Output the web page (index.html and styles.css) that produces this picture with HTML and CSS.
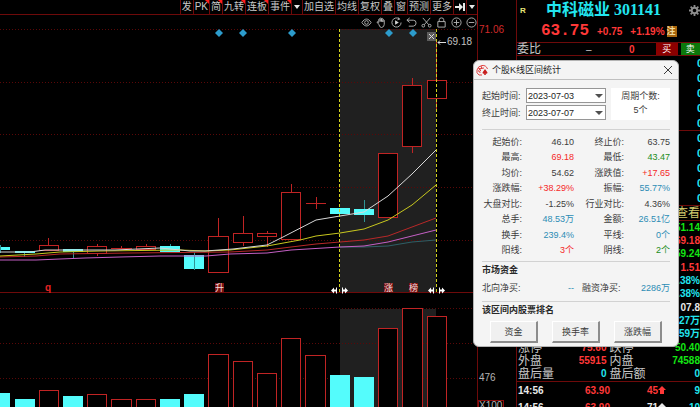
FILE: index.html
```html
<!DOCTYPE html>
<html lang="zh-CN">

<head>
    <meta charset="UTF-8">
    <title>中科磁业 301141</title>
    <link rel="stylesheet" href="styles.css">
</head>
<body>

  <div class="app">

    <main class="chart">
      <div class="chart-head">
        <nav class="toolbar">
          <button>发</button>
          <button class="hot">PK</button>
          <button class="hot">简</button>
          <button class="hot">九转</button>
          <button class="hot">连板</button>
          <button class="hot">事件</button>
          <button class="drop" aria-label="事件菜单"><svg viewBox="0 0 6 4"><path d="M0 0h6L3 4z"/></svg></button>
          <button>加自选</button>
          <button>均线</button>
          <button>复权</button>
          <button>叠</button>
          <button>窗</button>
          <button>预测</button>
          <button>更多</button>
          <button class="next" aria-label="移到最后"><svg viewBox="0 0 10 8"><path d="M0 3h4V0l4 4-4 4V5H0zM8 0h2v8H8z"/></svg></button>
          <button class="drop" aria-label="菜单"><svg viewBox="0 0 6 4"><path d="M0 0h6L3 4z"/></svg></button>
        </nav>

        <div class="tools">
          <button aria-label="显示"><svg viewBox="0 0 12 12"><path d="M1 6c3-5 7-5 10 0-3 5-7 5-10 0z"/><circle cx="6" cy="6" r="2"/></svg></button>
          <button aria-label="拖动"><svg viewBox="0 0 12 12"><path d="M3 8L1 5.500q1-1 2 .5V2.500q.8-1 1.500 0V5 1.500q.8-1 1.500 0V5 2q.8-1 1.500 0v3.500V3.500q1-1 1.500 0V8q0 3-3 3.500Q4 11.500 3 8z"/></svg></button>
          <button aria-label="回放"><svg viewBox="0 0 12 12"><path d="M9 2a5 5 0 1 0 2 4"/><path d="M8 .500l1.500 2-2.500.5"/><path class="solid" d="M4.500 3.500v5L8.500 6z"/></svg></button>
          <button aria-label="撤销"><svg viewBox="0 0 12 12"><path d="M4 1L1 3.500 4 6M1 3.500h7q3 0 3 3t-3 3.500H3"/></svg></button>
          <button aria-label="剪切"><svg viewBox="0 0 12 12"><path d="M2 1l6.500 7.500M10 1L3.500 8.500"/><circle cx="2.500" cy="9.500" r="1.500"/><circle cx="9.500" cy="9.500" r="1.500"/></svg></button>
          <button aria-label="锁定"><svg viewBox="0 0 12 12"><path d="M2 5h8v6H2zM3.500 5V3q0-2 2.500-2t2.500 2v2"/></svg></button>
          <button aria-label="放大"><svg viewBox="0 0 12 12"><circle cx="6" cy="6" r="5"/><path d="M3 6h6M6 3v6"/></svg></button>
          <button aria-label="缩小"><svg viewBox="0 0 12 12"><circle cx="6" cy="6" r="5"/><path d="M3 6h6"/></svg></button>
        </div>
      </div>

      <svg class="plot" viewBox="0 29 516 264">
        <rect class="band" x="340" y="29" width="96" height="264"/>
        <path class="grid" d="M0 29.500H477M0 82.500H477M0 134.500H477M0 187.500H477M0 240.500H477"/>
        <path class="frame" d="M0 292.500H516M477.500 29V293"/>

        <!-- candles -->
        <g class="up">
          <path d="M48.500 238v7M97.500 244v12M121.500 246v2M146.500 244v2M218.500 218v18M243.500 216v17M243.500 243v3M267.500 231v16M291.500 184v8M316.500 197v12M412.500 78v7M412.500 147v6M436.500 42v38M436.500 98v12"/>
          <path d="M111 248.500h21M306 203.500h20"/>
          <rect x="39.500" y="245.500" width="19" height="5"/>
          <rect x="87.500" y="246.500" width="19" height="7"/>
          <rect x="136.500" y="246.500" width="19" height="3"/>
          <rect x="208.500" y="236.500" width="20" height="36"/>
          <rect x="233.500" y="233.500" width="19" height="9"/>
          <rect x="257.500" y="233.500" width="19" height="3"/>
          <rect x="281.500" y="192.500" width="19" height="47"/>
          <rect x="378.500" y="153.500" width="19" height="64"/>
          <rect x="402.500" y="85.500" width="19" height="61"/>
          <rect x="427.500" y="80.500" width="19" height="18"/>
        </g>
        <g class="down">
          <rect x="-10" y="247" width="20" height="3"/>
          <rect x="15" y="251" width="20" height="2"/>
          <rect x="63" y="249" width="20" height="3"/>
          <rect x="160" y="246" width="20" height="6"/>
          <rect x="184" y="255" width="20" height="14"/>
          <rect x="330" y="208" width="20" height="6"/>
          <rect x="354" y="209" width="20" height="6"/>
          <path d="M.5 245v8M24.500 253v4M73.500 252v6M170.500 244v2M194.500 252v18M364.500 200v9M364.500 215v7"/>
        </g>

        <!-- moving averages -->
        <g class="ma">
          <polyline stroke="#2f5f66" points="340,247 364,247 388,246 412,242 436,240"/>
          <polyline stroke="#c45fc4" points="0,260 36,260 60,259 85,258 120,257 160,256 206,256 230,254 267,253 291,250 340,247 364,246 388,242 412,236 436,230"/>
          <polyline stroke="#b82828" points="0,257 36,256 60,254 130,253 230,252 267,250 291,247 316,244 340,242 364,240 388,236 412,227 436,218"/>
          <polyline stroke="#c8c81e" points="0,256 36,254 60,252 100,251 180,250 206,251 230,250 267,246 300,240 316,236 340,233 364,229 388,220 412,205 436,185"/>
          <polyline stroke="#d8d8d8" points="0,252 30,252 45,250 115,250 160,248 190,251 205,251 233,249 267,245 283,237 316,220 340,216 364,212 388,196 412,174 436,150"/>
        </g>

        <path class="limit" d="M339.500 29V292M436.500 29V292"/>

        <path class="diamond" d="M219 29l4 4-4 4-4-4zM243 29l4 4-4 4-4-4zM292 29l4 4-4 4-4-4zM389 29l4 4-4 4-4-4zM413 29l4 4-4 4-4-4z"/>

        <rect class="close-box" x="427" y="32" width="9" height="9"/>
        <path class="thin" d="M429 34l5 5M434 34l-5 5M438 42.500h8M440 40.500l-2 2 2 2"/>
        <text class="price-tip" x="447" y="45">69.18</text>

        <text class="mark-q" x="45" y="291">q</text>
        <rect class="mark" x="215" y="283" width="9" height="9"/>
        <rect class="mark" x="384" y="283" width="9" height="9"/>
        <rect class="mark" x="409" y="283" width="9" height="9"/>
        <text class="mark-text" x="215" y="291">升</text>
        <text class="mark-text" x="384" y="291">涨</text>
        <text class="mark-text" x="409" y="291">榜</text>

        <g class="handle">
          <path d="M331 290.500l3-3v2h2v-2h1v6h-1v-2h-2v2z"/>
          <path d="M348 290.500l-3-3v2h-2v-2h-1v6h1v-2h2v2z"/>
          <path d="M428 290.500l3-3v2h2v-2h1v6h-1v-2h-2v2z"/>
          <path d="M445 290.500l-3-3v2h-2v-2h-1v6h1v-2h2v2z"/>
        </g>

        <text class="axis-top" x="479" y="33">71.06</text>
      </svg>

      <svg class="plot" viewBox="0 293 516 114">
        <rect class="band" x="340" y="309" width="96" height="98"/>
        <path class="grid" d="M0 308.500H477M0 343.500H477M0 378.500H477"/>
        <path class="frame" d="M477.500 293V407"/>
        <g class="up">
          <rect x="39.500" y="390.500" width="19" height="20"/>
          <rect x="87.500" y="394.500" width="19" height="20"/>
          <rect x="111.500" y="399.500" width="20" height="20"/>
          <rect x="136.500" y="399.500" width="19" height="20"/>
          <rect x="208.500" y="354.500" width="20" height="60"/>
          <rect x="233.500" y="361.500" width="19" height="60"/>
          <rect x="257.500" y="373.500" width="19" height="60"/>
          <rect x="281.500" y="338.500" width="19" height="80"/>
          <rect x="305.500" y="355.500" width="20" height="60"/>
          <rect x="378.500" y="328.500" width="19" height="90"/>
          <rect x="402.500" y="308.500" width="20" height="110"/>
          <rect x="427.500" y="316.500" width="19" height="100"/>
        </g>
        <g class="down">
          <rect x="-10" y="393" width="20" height="20"/>
          <rect x="15" y="399" width="20" height="20"/>
          <rect x="63" y="396" width="20" height="20"/>
          <rect x="160" y="399" width="20" height="20"/>
          <rect x="184" y="394" width="20" height="20"/>
          <rect x="330" y="375" width="20" height="40"/>
          <rect x="354" y="377" width="20" height="40"/>
        </g>
        <text class="axis-text" x="479" y="347">951</text>
        <text class="axis-text" x="479" y="381">476</text>
        <rect class="unit-box" x="478.500" y="400.500" width="25" height="12"/>
        <text class="axis-text" x="479" y="409">X100</text>
      </svg>
    </main>

    <aside class="quote">
      <header class="stock">
        <span class="flag">R</span>
        <h1>中科磁业 301141</h1>
        <button class="gear" aria-label="设置"><svg viewBox="0 0 12 12"><circle cx="6" cy="6" r="3"/><path d="M6 0v2.500M6 9.500V12M0 6h2.500M9.500 6H12M1.800 1.800l1.800 1.800M8.400 8.400l1.800 1.800M1.800 10.200l1.800-1.800M8.400 3.600l1.800-1.800"/></svg></button>
      </header>

      <div class="price">
        <strong>63.75</strong>
        <span>+0.75</span>
        <span>+1.19%</span>
        <em>注</em>
      </div>

      <div class="ratio">
        <span class="label">委比</span>
        <span class="dash">–</span>
        <b class="red">0</b>
        <button class="buy">买</button>
        <button class="sell">卖</button>
      </div>

      <div class="levels"><b>0</b><b>0</b><b>0</b><b>0</b><b>0</b></div>
      <div class="levels"><b>0</b><b>0</b><b>0</b><b>0</b><b>0</b></div>

      <div class="look"><a href="#">查看</a></div>

      <table class="detail">
        <tr><th></th><td></td><th></th><td class="green">51.14</td></tr>
        <tr><th></th><td></td><th></th><td class="red">69.18</td></tr>
        <tr><th></th><td></td><th></th><td class="green">59.24</td></tr>
        <tr><th></th><td></td><th></th><td class="red">1.51</td></tr>
        <tr><th></th><td></td><th></th><td class="cyan">.38%</td></tr>
        <tr><th></th><td></td><th></th><td class="cyan">.38%</td></tr>
        <tr><th></th><td></td><th></th><td class="white">07.8</td></tr>
        <tr><th></th><td></td><th></th><td class="cyan">27万</td></tr>
        <tr><th></th><td></td><th></th><td class="cyan">59万</td></tr>
        <tr><th>涨停</th><td class="red">75.60</td><th>跌停</th><td class="green">50.40</td></tr>
        <tr><th>外盘</th><td class="red">55915</td><th>内盘</th><td class="green">74588</td></tr>
        <tr><th>盘后量</th><td class="cyan">0</td><th>盘后额</th><td class="cyan">0</td></tr>
      </table>

      <table class="ticks">
        <tr>
          <td class="white">14:56</td><td class="red">63.90</td>
          <td class="red">45<svg viewBox="0 0 8 8"><path d="M4 0l4 4H6v4H2V4H0z"/></svg></td><td class="cyan">9</td>
        </tr>
        <tr>
          <td class="white">14:56</td><td class="red">63.90</td>
          <td class="white">71<svg viewBox="0 0 8 8"><path d="M4 0l4 4H6v4H2V4H0z"/></svg></td><td class="cyan">10</td>
        </tr>
      </table>
    </aside>

    <section class="dialog" role="dialog" aria-labelledby="dialogTitle">
      <header class="dialog-title">
        <svg class="logo" viewBox="0 0 12 12"><path d="M6 11H3Q0 9 1 6q1-4 5-4.500Q10 1 11.500 5"/><path d="M3 8Q2 6 4 5t4-1M4 9q-1-2 1-3M2 4l3 1M5 2l1 3"/><path class="spade" d="M9 5l2.500 3.500q0 1.500-2 1.200l.5 1.300H8l.5-1.300q-2 .3-2-1.200z"/></svg>
        <h2 id="dialogTitle">个股K线区间统计</h2>
        <button class="close" aria-label="关闭"><svg viewBox="0 0 8 8"><path d="M0 0l8 8M8 0L0 8"/></svg></button>
      </header>

      <div class="dialog-body">
        <div class="range">
          <div class="fields">
            <label for="startDate">起始时间:</label>
            <div class="picker"><select id="startDate"><option>2023-07-03</option></select></div>
            <label for="endDate">终止时间:</label>
            <div class="picker"><select id="endDate"><option>2023-07-07</option></select></div>
          </div>
          <div class="count"><span>周期个数:</span><span>5个</span></div>
        </div>

        <table class="stats">
          <tr><th>起始价:</th><td>46.10</td><th>终止价:</th><td>63.75</td></tr>
          <tr><th>最高:</th><td class="rise">69.18</td><th>最低:</th><td class="fall">43.47</td></tr>
          <tr><th>均价:</th><td>54.62</td><th>涨跌值:</th><td class="rise">+17.65</td></tr>
          <tr><th>涨跌幅:</th><td class="rise">+38.29%</td><th>振幅:</th><td class="info">55.77%</td></tr>
          <tr><th>大盘对比:</th><td>-1.25%</td><th>行业对比:</th><td>4.36%</td></tr>
          <tr><th>总手:</th><td class="info">48.53万</td><th>金额:</th><td class="info">26.51亿</td></tr>
          <tr><th>换手:</th><td class="info">239.4%</td><th>平线:</th><td class="info">0个</td></tr>
          <tr><th>阳线:</th><td class="rise">3个</td><th>阴线:</th><td class="fall">2个</td></tr>
        </table>

        <div class="funds">
          <h3>市场资金</h3>
          <table>
            <tr><th>北向净买:</th><td class="info">--</td><th>融资净买:</th><td class="info">2286万</td></tr>
          </table>
        </div>

        <div class="rank">
          <h3>该区间内股票排名</h3>
          <div class="rank-buttons">
            <button>资金</button>
            <button>换手率</button>
            <button>涨跌幅</button>
          </div>
        </div>
      </div>
    </section>

  </div>

</body>
</html>
```
FILE: styles.css
```css
* {
    box-sizing: border-box;
}

body {
    margin: 0;
    background-color: #000;
    color: #c8c8c8;
    font-family: "Liberation Sans", "Noto Sans CJK SC", sans-serif;
    font-size: 9px;
}

button {
    margin: 0;
    padding: 0;
    border: none;
    background: none;
    color: inherit;
    font-family: inherit;
    font-size: inherit;
    cursor: pointer;
}

h1, h2, h3 {
    margin: 0;
}

table {
    border-collapse: collapse;
    table-layout: fixed;
    width: 100%;
}

th, td {
    padding: 0;
    font-weight: normal;
    white-space: nowrap;
}

svg {
    display: block;
}

.app {
    position: relative;
    display: grid;
    grid-template-columns: minmax(0, 1fr) 184px;
    height: 100vh;
    overflow: hidden;
}

.red { color: #ff3838; }
.green { color: #14e614; }
.cyan { color: #22e6f0; }
.white { color: #e8e8e8; }

/* chart */

.chart-head {
    height: 29px;
    margin-right: 38px;
    border-right: 1px solid #8c0c0c;
}

.toolbar {
    display: flex;
    justify-content: flex-end;
    height: 15px;
    border-bottom: 1px solid #6e0a0a;
}

.toolbar button {
    position: relative;
    padding: 0 1px;
    border-left: 1px solid #6e0a0a;
    font-size: 10px;
    line-height: 14px;
}

.toolbar .hot::after {
    content: "";
    position: absolute;
    top: 0;
    right: 0;
    border-top: 4px solid #ff1a1a;
    border-left: 4px solid transparent;
}

.toolbar svg {
    fill: #e8e8e8;
}

.toolbar .drop {
    padding: 0 2px;
}

.toolbar .drop svg {
    width: 6px;
    height: 4px;
}

.toolbar .next svg {
    width: 10px;
    height: 8px;
}

.tools {
    display: flex;
    justify-content: flex-end;
    align-items: center;
    gap: 4px;
    height: 14px;
}

.tools svg {
    width: 11px;
    height: 11px;
    fill: none;
    stroke: #b4b4b4;
}

.tools .solid {
    fill: #d8d8d8;
    stroke: none;
}

.plot {
    width: 100%;
    height: auto;
    overflow: visible;
}

.band { fill: #202020; }

.grid {
    stroke: #5a0808;
    stroke-dasharray: 1 2;
}

.frame { stroke: #6e0a0a; }

.up {
    fill: #000;
    stroke: #c02424;
}

.down { fill: #54fcfc; }
.down path { stroke: #2f9494; }

.ma {
    fill: none;
}

.limit {
    stroke: #d2d21e;
    stroke-dasharray: 3 2;
}

.diamond { fill: #2c9ccc; }
.close-box { fill: #5c5c5c; }

.thin {
    fill: none;
    stroke: #dcdcdc;
}

.plot text { font-size: 10px; }
.price-tip { fill: #c0c0c0; }
.axis-top { fill: #d22a2a; }
.axis-text { fill: #b4b4b4; }

.unit-box {
    fill: none;
    stroke: #8c0c0c;
}

.mark { fill: #7a1010; }

.plot .mark-text {
    fill: #f0dede;
    font-size: 9px;
}

.mark-q {
    fill: #e62424;
    font-weight: bold;
}

.handle { fill: #fff; }

/* quote panel */

.quote {
    border-left: 1px solid #6e0a0a;
    overflow: hidden;
    font-size: 10px;
}

.stock {
    display: flex;
    align-items: center;
    height: 20px;
    padding-left: 3px;
}

.flag {
    width: 26px;
    color: #e6e678;
    font-size: 8px;
    font-weight: bold;
}

.stock h1 {
    flex: 1;
    color: #22e6f0;
    font-family: "Liberation Serif", "Noto Sans CJK SC", serif;
    font-size: 16px;
    line-height: 20px;
}

.gear svg {
    width: 11px;
    height: 11px;
    fill: none;
    stroke: #8c8c8c;
    stroke-width: 2;
}

.price {
    display: flex;
    align-items: center;
    gap: 8px;
    height: 22px;
    padding-left: 24px;
    color: #ff3838;
    font-weight: bold;
}

.price strong {
    font-family: "Liberation Mono", monospace;
    font-size: 16px;
}

.price em {
    width: 10px;
    margin-left: -6px;
    background-color: #a8660e;
    color: #f0dca0;
    font-size: 9px;
    font-style: normal;
    line-height: 11px;
}

.ratio {
    display: grid;
    grid-template-columns: 44px 52px 40px 1fr 1fr;
    align-items: center;
    column-gap: 1px;
    height: 14px;
    border-top: 1px solid #6e0a0a;
    border-bottom: 1px solid #6e0a0a;
}

.label {
    font-size: 12px;
    line-height: 12px;
}

.dash {
    padding-left: 24px;
}

.ratio b {
    padding-left: 14px;
}

.ratio button {
    height: 12px;
    color: #fff;
    font-size: 9px;
    line-height: 12px;
}

.buy { background-color: #8c0000; }
.sell {
    background-color: #0c780c;
    margin-left: 2px;
}

.levels {
    display: flex;
    flex-direction: column;
    justify-content: space-around;
    height: 75px;
    padding-left: 180px;
    border-bottom: 1px solid #6e0a0a;
    color: #22e6f0;
    font-size: 11px;
    line-height: 12px;
}

.look {
    height: 15px;
    border-bottom: 1px solid #6e0a0a;
    text-align: right;
}

.look a {
    color: #d2cc6e;
    font-size: 12px;
    line-height: 14px;
    text-decoration: none;
}

.detail {
    height: 160px;
    line-height: 12px;
}

.detail th {
    width: 38px;
    padding-left: 1px;
    font-size: 12px;
    text-align: left;
}

.detail td {
    font-weight: bold;
    text-align: right;
}

.detail td:nth-child(2) {
    padding-right: 2px;
}

.ticks {
    border-top: 1px solid #6e0a0a;
}

.ticks td {
    height: 17px;
    font-weight: bold;
    text-align: right;
}

.ticks td:first-child {
    width: 38px;
    padding-left: 1px;
    text-align: left;
}

.ticks td:nth-child(2) {
    width: 55px;
}

.ticks td:nth-child(3) {
    width: 56px;
}

.ticks svg {
    display: inline-block;
    width: 8px;
    height: 8px;
    fill: currentColor;
}

/* range statistics dialog */

.dialog {
    position: absolute;
    top: 60px;
    right: 21px;
    width: 206px;
    border: 1px solid #b4b4b4;
    border-radius: 6px;
    background-color: #f4f4f4;
    color: #3c3c3c;
    line-height: 12px;
}

.dialog-title {
    display: flex;
    align-items: center;
    gap: 4px;
    height: 19px;
    padding: 0 6px 0 2px;
    border-bottom: 1px solid #c0c0c0;
    color: #1e1e1e;
}

.dialog-title h2 {
    flex: 1;
    font-size: 9px;
    font-weight: normal;
}

.logo {
    width: 12px;
    height: 12px;
    fill: none;
    stroke: #e04040;
}

.logo .spade {
    fill: #c81e1e;
    stroke: none;
}

.close svg {
    width: 8px;
    height: 8px;
    fill: none;
    stroke: #3c3c3c;
}

.dialog-body {
    padding: 8px 8px 3px;
}

.range {
    display: flex;
    justify-content: space-between;
    padding-bottom: 9px;
    border-bottom: 1px solid #d2d2d2;
}

.fields {
    display: grid;
    grid-template-columns: 44px 80px;
    row-gap: 2px;
    align-items: center;
}

.picker {
    position: relative;
}

.picker::after {
    content: "";
    position: absolute;
    top: 6px;
    right: 3px;
    border-top: 4px solid #505050;
    border-left: 4px solid transparent;
    border-right: 4px solid transparent;
    pointer-events: none;
}

.picker select {
    display: block;
    appearance: none;
    width: 100%;
    height: 15px;
    margin: 0;
    padding: 0 1px;
    border: 1px solid #969696;
    border-radius: 0;
    background-color: #fff;
    color: #1e1e1e;
    font-family: inherit;
    font-size: 9px;
}

.count {
    display: flex;
    flex-direction: column;
    align-items: center;
    gap: 2px;
    width: 59px;
    padding-top: 2px;
    background-color: #fff;
}

.stats {
    height: 124px;
    margin: 4px 0 3px;
}

.dialog th {
    width: 40px;
    text-align: right;
}

.dialog td {
    text-align: right;
}

.dialog td:nth-child(2) {
    width: 52px;
}

.dialog th:nth-child(3) {
    width: 50px;
}

.rise { color: #f42828; }
.fall { color: #1a8c1a; }
.info { color: #2c8cb4; }

.funds, .rank {
    border-top: 1px solid #d2d2d2;
}

.dialog h3 {
    padding: 2px 0;
    color: #282828;
    font-size: 9px;
    font-weight: bold;
}

.funds {
    height: 40px;
}

.funds table {
    margin-top: 4px;
}

.dialog .funds th {
    text-align: left;
}

.dialog .funds th:nth-child(3) {
    padding-left: 8px;
}

.rank-buttons {
    display: flex;
    justify-content: space-between;
    padding: 3px 8px 0;
}

.rank-buttons button {
    width: 48px;
    height: 22px;
    border: 1px solid #fff;
    border-right: 2px solid #8c8c8c;
    border-bottom: 2px solid #8c8c8c;
    background-color: #f0f0f0;
}
```
